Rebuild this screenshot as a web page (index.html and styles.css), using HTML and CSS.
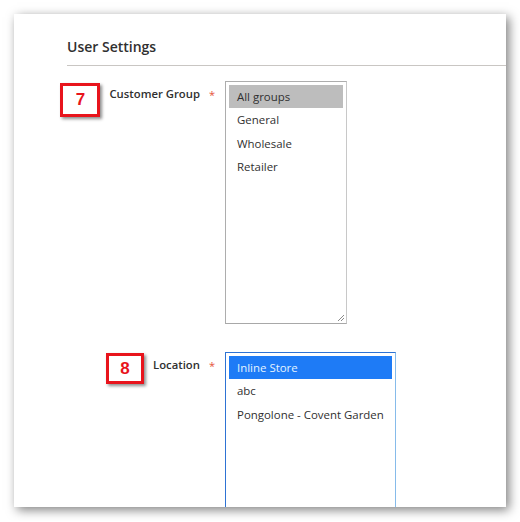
FILE: index.html
```html
<!DOCTYPE html>
<html>
<head>
<meta charset="utf-8">
<link rel="stylesheet" href="styles.css">
</head>
<body>
<div class="panel">
  <div class="section-title">User Settings</div>
  <div class="field field-group">
    <div class="label-cell">
      <span class="badge badge-7">7</span>
      <span class="label">Customer Group</span>
      <span class="req">*</span>
    </div>
    <div class="listbox listbox-gray">
      <div class="opt opt-selected-gray">All groups</div>
      <div class="opt">General</div>
      <div class="opt">Wholesale</div>
      <div class="opt">Retailer</div>
      <svg class="grip" width="9" height="9" viewBox="0 0 9 9"><path d="M8 2 L2 8 M8 5 L5 8" stroke="#8a8a8a" stroke-width="1" fill="none"/></svg>
    </div>
  </div>
  <div class="field field-location">
    <div class="label-cell">
      <span class="badge badge-8">8</span>
      <span class="label">Location</span>
      <span class="req">*</span>
    </div>
    <div class="listbox listbox-blue">
      <div class="opt opt-selected-blue">Inline Store</div>
      <div class="opt">abc</div>
      <div class="opt">Pongolone - Covent Garden</div>
    </div>
  </div>
</div>
</body>
</html>
```

FILE: styles.css
```css
html, body {
  margin: 0;
  padding: 0;
  background: #ffffff;
}
body {
  padding: 14px;
  font-family: "Open Sans", "Liberation Sans", sans-serif;
  color: #303030;
}
.panel {
  width: 492px;
  height: 493px;
  background: #ffffff;
  box-shadow: 3px 3px 10px rgba(0, 0, 0, 0.5);
  overflow: hidden;
}
.section-title {
  margin-left: 53px;
  padding: 23px 0 8px;
  font-size: 14px;
  line-height: 20px;
  font-weight: 600;
  color: #303030;
  border-bottom: 1px solid #c9c6c3;
}
.field {
  display: flex;
  align-items: flex-start;
}
.field-group {
  margin-top: 15px;
}
.field-location {
  margin-top: 28px;
}
.label-cell {
  width: 201px;
  display: flex;
  justify-content: flex-end;
  align-items: flex-start;
  padding-right: 10px;
}
.badge {
  box-sizing: border-box;
  display: flex;
  align-items: center;
  justify-content: center;
  border: 3px solid #e8141c;
  background: #fff;
  color: #e8141c;
  font-family: "Liberation Sans", Arial, sans-serif;
  font-weight: bold;
  font-size: 17px;
  box-shadow: 2px 2px 3px rgba(0, 0, 0, 0.45);
  margin-right: 9px;
}
.badge-7 {
  width: 40px;
  height: 34px;
  margin-top: 2px;
}
.badge-8 {
  width: 38px;
  height: 31px;
  margin-top: 1px;
}
.label {
  font-size: 11.3px;
  line-height: 16px;
  font-weight: 600;
  padding-top: 5px;
}
.req {
  color: #e5533a;
  font-size: 11px;
  line-height: 16px;
  padding-top: 6px;
  margin-left: 9px;
}
.listbox {
  position: relative;
  box-sizing: border-box;
  padding: 3px;
  font-size: 11.45px;
}
.listbox-gray {
  width: 122px;
  height: 243px;
  border: 1px solid #adadad;
  border-right-color: #c8c8c8;
  border-bottom-color: #a8a8a8;
}
.listbox-blue {
  width: 171px;
  height: 220px;
  border: 1px solid #2e73d4;
  border-right-color: #86bbea;
}
.opt {
  height: 23.4px;
  line-height: 23.4px;
  padding-left: 8px;
  color: #303030;
  white-space: nowrap;
}
.opt-selected-gray {
  background: #bdbdbd;
}
.opt-selected-blue {
  background: #1e7bf6;
  color: #e4f3ff;
}
.grip {
  position: absolute;
  right: 1px;
  bottom: 1px;
}
```
